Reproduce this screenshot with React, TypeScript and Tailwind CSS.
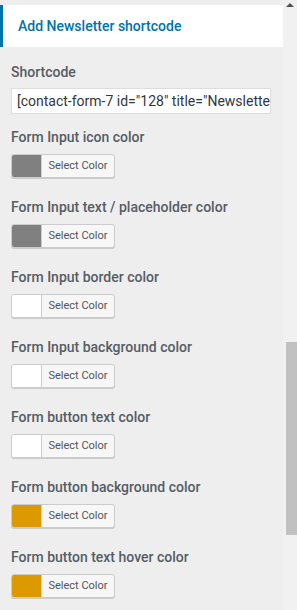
import React from "react";

const items: { label: string; color: string }[] = [
  { label: "Form Input icon color", color: "#808080" },
  { label: "Form Input text / placeholder color", color: "#808080" },
  { label: "Form Input border color", color: "#ffffff" },
  { label: "Form Input background color", color: "#ffffff" },
  { label: "Form button text color", color: "#ffffff" },
  { label: "Form button background color", color: "#dd9900" },
  { label: "Form button text hover color", color: "#dd9900" },
];

function ColorButton({ color }: { color: string }) {
  return (
    <div className="flex h-[24px] w-[104px] overflow-hidden rounded-[3px] border border-[#cccccc] bg-[#f7f7f7] shadow-[0_1px_0_#cccccc]">
      <div className="w-[30px] h-full border-r border-[#cccccc]" style={{ backgroundColor: color }} />
      <div className="flex flex-1 items-center justify-center text-[11px] text-[#555555]">Select Color</div>
    </div>
  );
}

export default function App() {
  return (
    <div
      className="flex h-[610px] w-[297px] overflow-hidden bg-[#eeeeee]"
      style={{ fontFamily: "Roboto, 'Liberation Sans', sans-serif" }}
    >
      <div className="w-[283px] pt-[5px]">
        <div className="flex h-[42px] items-center border-l-[3px] border-[#0073aa] bg-white pl-[15px] text-[14px] font-medium text-[#0073aa]">
          Add Newsletter shortcode
        </div>
        <div className="px-[11px]">
          <div className="mt-[15px] h-[20px] text-[14px] font-medium leading-[20px] text-[#555d66]">Shortcode</div>
          <div className="mt-[6px] flex h-[26px] w-[260px] items-center overflow-hidden whitespace-nowrap border border-[#dddddd] bg-white pl-[5px] text-[14px] text-[#32373c]">
            [contact-form-7 id="128" title="Newsletter"]
          </div>
          <div className="mt-[13px] flex flex-col gap-[19px]">
            {items.map((it) => (
              <div key={it.label} className="flex flex-col gap-[7px]">
                <div className="h-[20px] whitespace-nowrap text-[14px] font-medium leading-[20px] text-[#555d66]">{it.label}</div>
                <ColorButton color={it.color} />
              </div>
            ))}
          </div>
        </div>
      </div>
      <div className="flex w-[14px] flex-col items-center bg-[#f1f1f1]">
        <div className="mt-[3px] h-0 w-0 border-x-[4px] border-b-[4px] border-x-transparent border-b-[#505050]" />
        <div className="ml-[2px] mt-[335px] h-[193px] w-[11px] bg-[#c1c1c1]" />
      </div>
    </div>
  );
}
